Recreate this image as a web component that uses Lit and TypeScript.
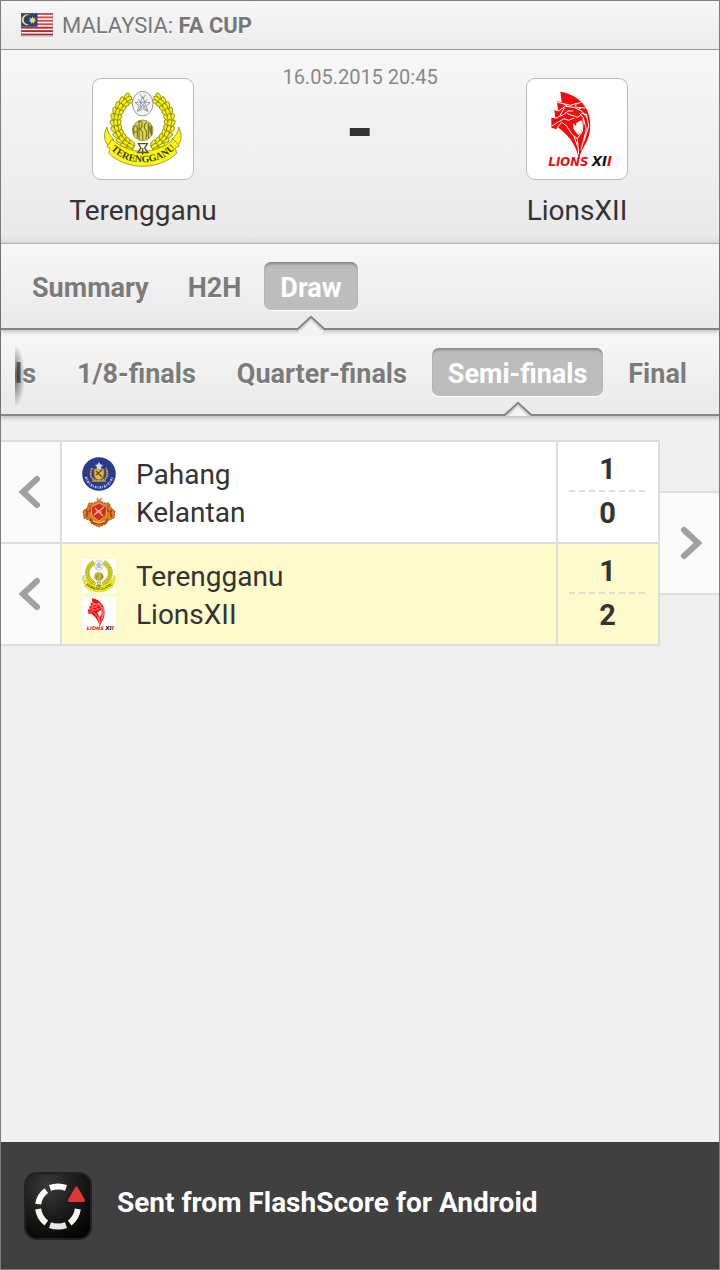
import { LitElement, html, svg, css, nothing } from "lit";
import { customElement, property, state } from "lit/decorators.js";

type Logo = "terengganu" | "lions" | "pahang" | "kelantan";

interface Side {
  name: string;
  logo: Logo;
  goals: number;
}

interface Tie {
  sides: [Side, Side];
  current: boolean;
}

const TABS = ["Summary", "H2H", "Draw"];
const ROUNDS = ["1/16-finals", "1/8-finals", "Quarter-finals", "Semi-finals", "Final"];

const TIES: Tie[] = [
  {
    current: false,
    sides: [
      { name: "Pahang", logo: "pahang", goals: 1 },
      { name: "Kelantan", logo: "kelantan", goals: 0 },
    ],
  },
  {
    current: true,
    sides: [
      { name: "Terengganu", logo: "terengganu", goals: 1 },
      { name: "LionsXII", logo: "lions", goals: 2 },
    ],
  },
];

/* Pairs of leaves running along both arms of the wreath. */
const wreath = () => {
  const leaves = [];
  for (const side of [-1, 1]) {
    for (let i = 0; i < 11; i++) {
      const deg = 32 + i * 12.2;
      const rad = (deg * Math.PI) / 180;
      for (const [r, tilt] of [[90, 28], [72, -28], [81, 0]]) {
        const x = 158 + side * r * Math.sin(rad);
        const y = 137 - r * Math.cos(rad);
        leaves.push(svg`<ellipse cx=${x.toFixed(1)} cy=${y.toFixed(1)} rx="11" ry="6"
          transform=${`rotate(${(side * (deg + tilt)).toFixed(1)} ${x.toFixed(1)} ${y.toFixed(1)})`}/>`);
      }
    }
  }
  return leaves;
};

const terengganu = () => html`<svg viewBox="39 39 240 240" aria-hidden="true">
  <rect x="39" y="39" width="240" height="240" fill="#fff" />
  <g fill="#f4ee12" stroke="#6e6b12" stroke-width="2">${wreath()}</g>
  <g fill="#fbf614" stroke="#77741a" stroke-width="2" stroke-linejoin="round">
    <path d="M51 153C38 178 42 200 60 212L72 190C60 180 53 170 51 153Z" />
    <path d="M266 153C279 178 275 200 257 212L245 190C257 180 264 170 266 153Z" />
    <path d="M66 190C120 238 196 238 250 190L268 210L256 216L260 232C205 284 112 284 56 232L60 218L50 212Z" />
  </g>
  <g fill="none" stroke="#55531c" stroke-width="4">
    <path d="M145 203H172L164 216L174 230H143L153 216Z" />
    <path d="M158 216V236" />
  </g>
  <ellipse cx="158" cy="83" rx="31" ry="37" fill="#f3f3f5" stroke="#85858b" stroke-width="2.5" />
  <g fill="none" stroke="#85858b" stroke-width="2.5">
    <path d="M158 62L164 78L180 80L168 90L174 106L158 98L142 106L148 90L136 80L152 78Z" />
    <path d="M152 55A7 7 0 1 0 165 55M145 70L171 104M171 70L145 104" />
    <circle cx="158" cy="86" r="8" />
  </g>
  <circle cx="158" cy="163" r="31" fill="#dcd74d" />
  <g fill="none" stroke="#77742b" stroke-width="3.5">
    <path d="M131 178V154Q139 142 142 156V185M132 168H142M147 190V136Q158 134 156 148Q154 158 148 159Q161 162 158 192M170 139Q160 146 164 158Q173 166 168 188M175 187V142L183 174V148M185 149V179" />
    <circle cx="158" cy="163" r="31" stroke-width="2" />
  </g>
  <path id="ribbon" d="M64 222C116 272 202 272 254 220" fill="none" />
  <text fill="#3f3d12" font-family="Liberation Serif, serif" font-weight="700" font-size="30">
    <textPath href="#ribbon" startOffset="50%" text-anchor="middle">TERENGGANU</textPath>
  </text>
</svg>`;

const lions = () => html`<svg viewBox="39 39 240 240" aria-hidden="true">
  <rect x="39" y="39" width="240" height="240" fill="#fff" />
  <path fill="#f50a0a" d="M109 47C142 52 169 69 184 93C199 115 202 150 195 178C190 202 171 218 165 251C160 225 151 206 139 190C128 175 113 163 100 152L98 160L82 155V125L94 127L91 103L102 105L99 76L113 79Z" />
  <path fill="#fff" d="M148 141L155 150L158 140L172 133L176 151L172 168L163 178L155 168L148 158Z" />
  <g fill="none" stroke="#fff" stroke-width="3" stroke-linejoin="round">
    <path d="M100 79L140 88L157 82L154 92L171 98M102 106L124 91L150 94L174 106L188 124M94 127L118 116L132 105L148 105M82 151L100 140L120 128L135 133" />
    <path d="M101 153L113 139L127 149L145 176L160 188L175 166L178 126L167 112" />
    <path d="M178 126L187 160L171 222M188 118L194 150L180 196M160 188L164 235M150 181L161 212M121 96L108 118M130 90L116 82M157 84L170 79M164 94L184 96M172 112L190 116" />
    <path d="M129 112C138 119 150 117 160 124L170 118M136 132L151 126" />
  </g>
  <g font-family="DejaVu Sans, sans-serif" font-weight="700" font-style="italic">
    <text x="73" y="269" font-size="36" fill="#e80d12">L<tspan font-size="35">IONS</tspan></text>
    <text x="203" y="269" font-size="40" fill="#111">XI<tspan fill="#e80d12">I</tspan></text>
  </g>
</svg>`;

const pahang = () => html`<svg viewBox="0 0 34 34" aria-hidden="true">
  <circle cx="17" cy="17" r="16.8" fill="#2b3c90" />
  <path d="M10 11Q6 21 14 23.5H20Q28 21 24 11" fill="none" stroke="#c9a13a" stroke-width="2" stroke-dasharray="2 .7" />
  <path d="M12 12H22V17Q22 22 17 23Q12 22 12 17Z" fill="#e8b93a" stroke="#8b6a34" stroke-width=".8" />
  <path d="M14 18L20 13M14 14L20 20" stroke="#5a5030" stroke-width="1.3" />
  <path d="M17 5L18.5 7.5L21 8L19 10L19.5 12H14.5L15 10L13 8L15.5 7.5Z" fill="#cfd8ee" />
  <path d="M10 24H24" stroke="#c9a13a" stroke-width="1.5" />
  <path d="M4 20Q7 30 17 30.5Q27 30 30.5 20" fill="none" stroke="#b9c3e6" stroke-width="2.4" stroke-dasharray="1.6 1 .8 1.2" />
</svg>`;

const kelantan = () => html`<svg viewBox="0 0 34 34" aria-hidden="true">
  <path d="M14 4.5L16 2L17 5L19 2L20.5 4.5L17 6Z" fill="#e8a365" />
  <path d="M17 5L22 8L27 8L29 13L33 16L32 23L27 25L24 29L17 32L10 29L7 25L2 23L1 16L5 13L7 8L12 8Z" fill="#dc7a25" stroke="#a84818" stroke-width="1" stroke-dasharray="2 1" />
  <path d="M4 15Q7 17 4 22M30 15Q27 17 30 22M8 11Q10 14 7 17M26 11Q24 14 27 17M8 24L12 28L17 29L22 28L26 24" fill="none" stroke="#a13a17" stroke-width="1.5" />
  <path d="M17 8L25 12L24 21L17 26L10 21L9 12Z" fill="#cf2f22" stroke="#edb443" stroke-width="1" />
  <path d="M12 20L22 12M13 13L21 21M14 17H20" stroke="#eeb79a" stroke-width="1.2" />
  <path d="M11 26L17 28L23 26" fill="none" stroke="#f0c04a" stroke-width="1.4" />
</svg>`;

const LOGOS = { terengganu, lions, pahang, kelantan };

const flag = () => html`<svg class="flag" viewBox="0 0 32 24" aria-hidden="true">
  <rect width="32" height="24" fill="#fff" />
  ${[0, 1, 2, 3, 4, 5, 6].map((i) => svg`<rect y=${i * 3.43} width="32" height="1.9" fill=${i > 3 ? "#b3262b" : "#e2474b"} />`)}
  <rect width="16.5" height="13.7" fill="#27427f" />
  <path d="M9 2.5A4.6 4.6 0 1 0 9 11A5.2 5.2 0 1 1 9 2.5Z" fill="#f5e25b" />
  <path d="M11.5 3.4L12.4 5.4L14.6 4.8L13.6 6.8L15.3 8.2L13.1 8.6L13 10.8L11.5 9.2L9.9 10.8L9.9 8.6L7.7 8.2L9.4 6.8L8.4 4.8L10.6 5.4Z" fill="#f5e25b" />
  <rect x=".5" y=".5" width="31" height="23" fill="none" stroke="#777" stroke-opacity=".4" />
</svg>`;

const appIcon = () => html`<svg class="app-icon" viewBox="0 0 68 68" aria-hidden="true">
  <defs>
    <radialGradient id="tile" cx=".35" cy=".2" r=".85">
      <stop offset="0" stop-color="#3a3a3a" />
      <stop offset=".55" stop-color="#1b1b1b" />
      <stop offset="1" stop-color="#050505" />
    </radialGradient>
  </defs>
  <rect x="1" y="1" width="66" height="66" rx="12" fill="url(#tile)" stroke="#222" stroke-width="2" />
  <g fill="none" stroke="#fff" stroke-width="6" stroke-linejoin="round">
    <path d="M26 15.9Q34 13.2 42 15.9" />
    <path d="M22.3 18.6Q15.3 23.5 14.2 32.2" />
    <path d="M14.2 37Q15.3 45.7 22.3 51" stroke="#f1f5ee" />
    <path d="M26 53.2Q34 56 42 53.2" stroke="#e3ebdf" />
    <path d="M45.7 51Q52.7 45.7 53.8 37" stroke="#f1f5ee" />
  </g>
  <path d="M52.5 16L59.5 28.5H45.5Z" fill="#dd3a34" stroke="#dd3a34" stroke-width="3" stroke-linejoin="round" />
</svg>`;

@customElement("tab-strip")
export class TabStrip extends LitElement {
  @property({ attribute: false }) items: string[] = [];
  @property() active = "";
  @property() label = "";
  @property({ type: Boolean, reflect: true }) scrolled = false;

  static styles = css`
    :host {
      display: block;
      position: relative;
      z-index: 1;
      height: 86px;
      box-sizing: border-box;
      padding: 0 16px 0 15px;
      background: linear-gradient(#f7f7f7, #e9e9e8);
      border-bottom: 2px solid #858583;
      box-shadow: 0 2px 4px rgba(0, 0, 0, 0.22);
    }
    .strip {
      display: flex;
      gap: 7px;
      height: 86px;
      padding-top: 18px;
      box-sizing: border-box;
    }
    :host([scrolled]) {
      z-index: 0;
    }
    :host([scrolled]) .strip {
      justify-content: flex-end;
      gap: 9px;
      overflow: hidden;
    }
    :host([scrolled])::before {
      content: "";
      position: absolute;
      z-index: 1;
      left: 14px;
      top: 14px;
      width: 10px;
      height: 64px;
      background: radial-gradient(ellipse at left, rgba(0, 0, 0, 0.6), transparent 70%);
    }
    .tab {
      flex: none;
      position: relative;
      height: 48px;
      padding: 0 16px;
      border: 0;
      border-radius: 7px;
      background: none;
      color: #7b7b7b;
      font: 700 27px/52px Roboto, "Liberation Sans", sans-serif;
      text-shadow: 0 1px 0 #fff;
      white-space: nowrap;
      cursor: pointer;
    }
    .tab.on {
      background: #bdbdbd;
      color: #fff;
      text-shadow: none;
      box-shadow: inset 0 3px 3px -1px rgba(0, 0, 0, 0.3), 0 1px 1px #fff;
    }
    .caret {
      position: absolute;
      top: 53px;
      left: calc(50% - 16px);
      width: 32px;
      height: 21px;
    }
  `;

  private pick(item: string) {
    this.dispatchEvent(new CustomEvent("pick", { detail: item }));
  }

  render() {
    return html`<div class="strip" role="tablist" aria-label=${this.label}>
      ${this.items.map((item) => {
        const on = item === this.active;
        return html`<button class="tab ${on ? "on" : ""}" role="tab" aria-selected=${on} @click=${() => this.pick(item)}>${item}${on
          ? html`<svg class="caret" viewBox="0 0 32 21" aria-hidden="true">
              <path d="M3 14L16 2L29 14L27 19H5Z" fill="#f3f3f3" />
              <path d="M1 14.5L3 13.8L16 1.8L29 13.8L31 14.5" fill="none" stroke="#858583" stroke-width="2" />
              <path d="M5 15L16 4.4L27 15" fill="none" stroke="#000" stroke-opacity=".12" stroke-width="2" />
            </svg>`
          : nothing}</button>`;
      })}
    </div>`;
  }
}

@customElement("draw-bracket")
export class DrawBracket extends LitElement {
  @property({ attribute: false }) ties: Tie[] = [];

  static styles = css`
    :host {
      display: grid;
      grid-template-columns: 1fr 59px;
      align-items: center;
      padding-top: 24px;
      color: #333;
    }
    .ties {
      margin: 0;
      padding: 0;
      list-style: none;
      border-bottom: 2px solid #ddd;
    }
    .tie {
      display: grid;
      grid-template-columns: 59px 1fr 104px;
      height: 100px;
      border-top: 2px solid #ddd;
      background: #fff;
    }
    .current {
      background: #fdfacb;
    }
    .step {
      display: grid;
      place-items: center;
      padding: 0;
      border: 0;
      background: #fafafa;
      cursor: pointer;
    }
    .next {
      height: 104px;
      border: solid #ddd;
      border-width: 2px 0;
    }
    .arrow {
      width: 24px;
      height: 34px;
      fill: none;
      stroke: #a0a0a0;
      stroke-width: 6;
      stroke-linecap: round;
    }
    .teams {
      padding: 12px 20px;
      border-left: 2px solid #ddd;
    }
    .team {
      display: grid;
      grid-template-columns: 34px 1fr;
      align-items: center;
      gap: 20px;
      height: 38px;
      font-size: 28px;
      line-height: 38px;
    }
    .name {
      padding-top: 2px;
    }
    .team svg {
      width: 34px;
      height: 34px;
    }
    .score {
      display: grid;
      grid-template-rows: 42px 2px 42px;
      box-sizing: border-box;
      padding: 6px 12px 8px 11px;
      border: solid #ddd;
      border-width: 0 2px;
      font-size: 29px;
      font-weight: 700;
      line-height: 42px;
      text-align: center;
    }
    .rule {
      background: repeating-linear-gradient(90deg, #ddd 0 6px, transparent 6px 10px);
    }
  `;

  render() {
    return html`
      <ol class="ties">
        ${this.ties.map(
          ({ sides, current }) => html`<li class="tie ${current ? "current" : ""}">
            <button class="step" aria-label="Previous round">
              <svg class="arrow" viewBox="0 0 24 34" aria-hidden="true"><path d="M18 4L4 17L18 30" /></svg>
            </button>
            <div class="teams">
              ${sides.map((s) => html`<div class="team">${LOGOS[s.logo]()}<span class="name">${s.name}</span></div>`)}
            </div>
            <div class="score">
              <span>${sides[0].goals}</span>
              <span class="rule"></span>
              <span>${sides[1].goals}</span>
            </div>
          </li>`
        )}
      </ol>
      <button class="step next" aria-label="Next round">
        <svg class="arrow" viewBox="0 0 24 34" aria-hidden="true"><path d="M6 4L20 17L6 30" /></svg>
      </button>
    `;
  }
}

@customElement("app-root")
export class AppRoot extends LitElement {
  @state() private tab = "Draw";
  @state() private round = "Semi-finals";

  static styles = css`
    :host {
      display: flex;
      flex-direction: column;
      box-sizing: border-box;
      min-height: 100vh;
      border: 1px solid #7c7c7c;
      background: #efefef;
      color: #333;
      font-family: Roboto, "Liberation Sans", sans-serif;
    }
    .league {
      display: flex;
      align-items: center;
      gap: 9px;
      height: 48px;
      padding: 0 20px;
      border-bottom: 1px solid #999;
      background: linear-gradient(#f7f7f7, #ebebeb);
      color: #777;
    }
    .flag {
      width: 32px;
      height: 24px;
    }
    .league-name {
      margin: 0;
      font-size: 22px;
      font-weight: 400;
      text-shadow: 0 1px 0 #fff;
    }
    .match {
      display: grid;
      grid-template-columns: 1fr 150px 1fr;
      height: 193px;
      border-bottom: 1px solid #b5b5b5;
      background: linear-gradient(#f7f7f7, #e9e9e9 96%, #dcdcdc);
      text-align: center;
    }
    .club {
      display: flex;
      flex-direction: column;
      align-items: center;
      gap: 11px;
      padding-top: 28px;
      font-size: 28px;
      line-height: 40px;
    }
    .badge {
      box-sizing: border-box;
      width: 102px;
      height: 102px;
      padding: 10px;
      border: 1px solid #bbb;
      border-radius: 9px;
      background: #fff;
    }
    .badge svg {
      display: block;
    }
    .info {
      display: flex;
      flex-direction: column;
      align-items: center;
      padding-top: 14px;
    }
    .time {
      color: #888;
      font-size: 20px;
      line-height: 26px;
      white-space: nowrap;
    }
    .result {
      font-size: 72px;
      font-weight: 700;
      line-height: 80px;
    }
    .main {
      flex: 1;
    }
    .sent {
      display: flex;
      align-items: center;
      gap: 25px;
      height: 127px;
      padding: 0 23px;
      background: #404040;
      color: #fff;
      font-size: 28px;
      font-weight: 700;
    }
    .app-icon {
      flex: none;
      width: 68px;
      height: 68px;
    }
    .sent-text {
      margin: 0;
      padding-bottom: 6px;
    }
  `;

  render() {
    return html`
      <header class="league">
        ${flag()}
        <h1 class="league-name">MALAYSIA: <b>FA CUP</b></h1>
      </header>
      <section class="match">
        <div class="club">
          <div class="badge">${terengganu()}</div>
          <span>Terengganu</span>
        </div>
        <div class="info">
          <time class="time" datetime="2015-05-16T20:45">16.05.2015 20:45</time>
          <span class="result">-</span>
        </div>
        <div class="club">
          <div class="badge">${lions()}</div>
          <span>LionsXII</span>
        </div>
      </section>
      <tab-strip label="Match sections" .items=${TABS} .active=${this.tab} @pick=${(e: CustomEvent) => (this.tab = e.detail)}></tab-strip>
      <tab-strip scrolled label="Rounds" .items=${ROUNDS} .active=${this.round} @pick=${(e: CustomEvent) => (this.round = e.detail)}></tab-strip>
      <main class="main">
        <draw-bracket .ties=${TIES}></draw-bracket>
      </main>
      <footer class="sent">
        ${appIcon()}
        <p class="sent-text">Sent from FlashScore for Android</p>
      </footer>
    `;
  }
}
